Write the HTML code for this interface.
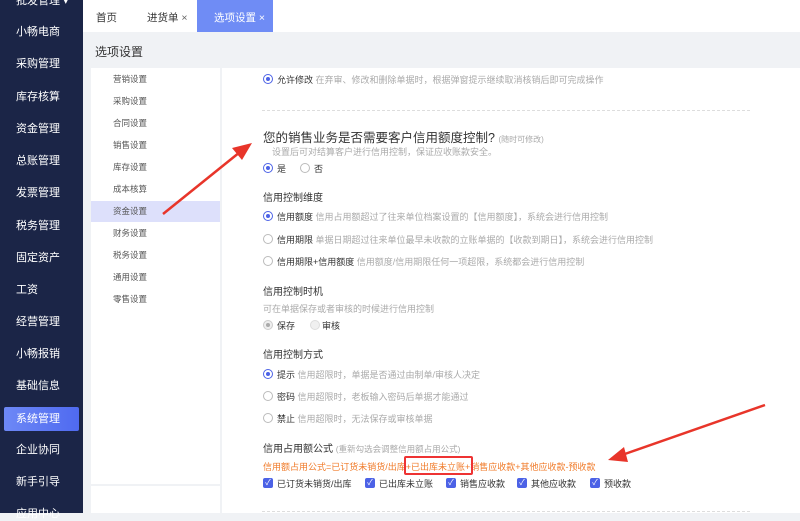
<!DOCTYPE html>
<html><head><meta charset="utf-8"><style>
*{margin:0;padding:0;box-sizing:border-box}
body{width:800px;height:513px;overflow:hidden;position:relative;background:#f0f2f5;font-family:"Liberation Sans","Noto Sans CJK SC",sans-serif;font-size:9px;color:#333}
.sb{position:absolute;left:0;top:0;width:83px;height:513px;background:#1b2547}
.sb div{position:absolute;left:16px;color:#fff;font-size:11px;line-height:14px}
.sb .act{left:4px;width:75px;height:24px;background:linear-gradient(90deg,#6d88f6,#4f6af0);border-radius:2px;padding-left:12px;line-height:24px}
.tabs{position:absolute;left:83px;top:0;width:717px;height:32px;background:#fff}
.tabs span{position:absolute;top:10px;font-size:10.5px;color:#333}
.tact{position:absolute;left:114px;top:0;width:76px;height:32px;background:#6f8cf5}
.title{position:absolute;left:95px;top:43px;font-size:12px;color:#333}
.nav{position:absolute;left:91px;top:68px;width:129px;height:416px;background:#fff}
.nav2{position:absolute;left:91px;top:486px;width:129px;height:27px;background:#fff}
.nav div{position:absolute;left:22px;font-size:8.5px;color:#555;line-height:12px}
.nav div.navh{left:0;top:133px;width:129px;height:21px;background:#dde0fb}
.main{position:absolute;left:222px;top:68px;width:578px;height:445px;background:#fff}
.t{position:absolute;white-space:nowrap}
.r{position:absolute;width:10px;height:10px;border:1px solid #bbb;border-radius:50%;background:#fff}
.r.on{border-color:#4c62e6}
.r.on::after{content:"";position:absolute;left:2px;top:2px;width:4px;height:4px;border-radius:50%;background:#4c62e6}
.r.gr{border-color:#ccc;background:#eee}
.r.gr::after{content:"";position:absolute;left:2px;top:2px;width:4px;height:4px;border-radius:50%;background:#aaa}
.r.ge{border-color:#ddd;background:#f0f0f0}
.cb{position:absolute;width:10px;height:10px;background:#4c62e6;border-radius:2px;color:#fff;font-size:8px;line-height:10px;text-align:center}
.g{color:#aaa}
.h{font-size:10px;color:#333}
.dash{position:absolute;left:262px;width:488px;border-top:1px dashed #ddd}
</style></head><body>
<div class="sb">
<div style="top:-6px">批发管理 ▾</div>
<div style="top:25px">小畅电商</div>
<div style="top:57px">采购管理</div>
<div style="top:90px">库存核算</div>
<div style="top:122px">资金管理</div>
<div style="top:154px">总账管理</div>
<div style="top:186px">发票管理</div>
<div style="top:219px">税务管理</div>
<div style="top:251px">固定资产</div>
<div style="top:283px">工资</div>
<div style="top:315px">经营管理</div>
<div style="top:347px">小畅报销</div>
<div style="top:379px">基础信息</div>
<div class="act" style="top:407px">系统管理</div>
<div style="top:443px">企业协同</div>
<div style="top:475px">新手引导</div>
<div style="top:507px">应用中心</div>
</div>
<div class="tabs"><span style="left:13px">首页</span><span style="left:64px">进货单 <span style="position:static;color:#666">×</span></span>
<div class="tact"></div><span style="left:131px;color:#fff">选项设置 ×</span></div>
<div class="title">选项设置</div>
<div class="nav"><div class="navh"></div>
<div style="top:5px">营销设置</div><div style="top:27px">采购设置</div><div style="top:49px">合同设置</div><div style="top:71px">销售设置</div><div style="top:93px">库存设置</div><div style="top:115px">成本核算</div><div style="top:137px">资金设置</div><div style="top:159px">财务设置</div><div style="top:181px">税务设置</div><div style="top:203px">通用设置</div><div style="top:225px">零售设置</div></div>
<div class="nav2"></div>
<div class="main"></div>
<div class="r on" style="left:263px;top:74px"></div><div class="t" style="left:277px;top:73px">允许修改 <span class="g">在弃审、修改和删除单据时，根据弹窗提示继续取消核销后即可完成操作</span></div>
<div class="dash" style="top:110px"></div>
<div class="t" style="left:263px;top:127px;font-size:12.5px">您的销售业务是否需要客户信用额度控制? <span class="g" style="font-size:8px">(随时可修改)</span></div>
<div class="t g" style="left:272px;top:145px">设置后可对结算客户进行信用控制，保证应收账款安全。</div>
<div class="r on" style="left:263px;top:163px"></div><div class="t" style="left:277px;top:162px">是</div>
<div class="r" style="left:300px;top:163px"></div><div class="t" style="left:314px;top:162px">否</div>
<div class="t h" style="left:263px;top:189px">信用控制维度</div>
<div class="r on" style="left:263px;top:211px"></div><div class="t" style="left:277px;top:210px">信用额度 <span class="g">信用占用额超过了往来单位档案设置的【信用额度】，系统会进行信用控制</span></div>
<div class="r" style="left:263px;top:234px"></div><div class="t" style="left:277px;top:233px">信用期限 <span class="g">单据日期超过往来单位最早未收款的立账单据的【收款到期日】，系统会进行信用控制</span></div>
<div class="r" style="left:263px;top:256px"></div><div class="t" style="left:277px;top:255px">信用期限+信用额度 <span class="g">信用额度/信用期限任何一项超限，系统都会进行信用控制</span></div>
<div class="t h" style="left:263px;top:283px">信用控制时机</div>
<div class="t g" style="left:263px;top:302px">可在单据保存或者审核的时候进行信用控制</div>
<div class="r gr" style="left:263px;top:320px"></div><div class="t" style="left:277px;top:319px">保存</div>
<div class="r ge" style="left:310px;top:320px"></div><div class="t" style="left:322px;top:319px">审核</div>
<div class="t h" style="left:263px;top:346px">信用控制方式</div>
<div class="r on" style="left:263px;top:369px"></div><div class="t" style="left:277px;top:368px">提示 <span class="g">信用超限时，单据是否通过由制单/审核人决定</span></div>
<div class="r" style="left:263px;top:391px"></div><div class="t" style="left:277px;top:390px">密码 <span class="g">信用超限时，老板输入密码后单据才能通过</span></div>
<div class="r" style="left:263px;top:413px"></div><div class="t" style="left:277px;top:412px">禁止 <span class="g">信用超限时，无法保存或审核单据</span></div>
<div class="t h" style="left:263px;top:440px">信用占用额公式 <span class="g" style="font-size:8.5px">(重新勾选会调整信用额占用公式)</span></div>
<div class="t" style="left:263px;top:460px;color:#f07b2a">信用额占用公式=已订货未销货/出库+已出库未立账+销售应收款+其他应收款-预收款</div>
<div style="position:absolute;left:404px;top:456px;width:69px;height:19px;border:2px solid #e33;border-radius:2px"></div>
<div class="cb" style="left:263px;top:478px">✓</div><div class="t" style="left:277px;top:477px">已订货未销货/出库</div>
<div class="cb" style="left:365px;top:478px">✓</div><div class="t" style="left:379px;top:477px">已出库未立账</div>
<div class="cb" style="left:446px;top:478px">✓</div><div class="t" style="left:460px;top:477px">销售应收款</div>
<div class="cb" style="left:517px;top:478px">✓</div><div class="t" style="left:531px;top:477px">其他应收款</div>
<div class="cb" style="left:590px;top:478px">✓</div><div class="t" style="left:604px;top:477px">预收款</div>
<div class="dash" style="top:511px"></div>
<svg style="position:absolute;left:0;top:0" width="800" height="513">
<line x1="163" y1="214" x2="240" y2="152" stroke="#e8352a" stroke-width="2.5"/>
<polygon points="252,143 232,148 242,160" fill="#e8352a"/>
<line x1="765" y1="405" x2="622" y2="455" stroke="#e8352a" stroke-width="2.5"/>
<polygon points="608,460 624,447 628,462" fill="#e8352a"/>
</svg>
</body></html>
